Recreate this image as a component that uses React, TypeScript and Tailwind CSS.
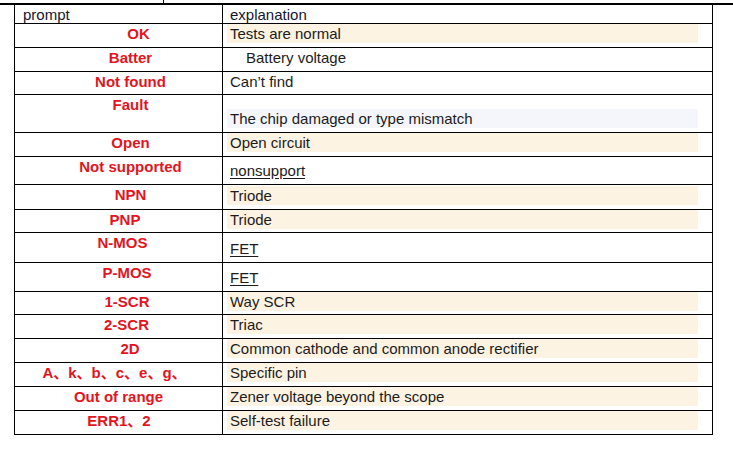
type Row = {
  prompt: string;
  text: string;
  h: string;
  shift: string;
  bg: string;
  extra?: string;
};

const rows: Row[] = [
  { prompt: "OK", text: "Tests are normal", h: "h-[24px]", shift: "pl-[40px]", bg: "bg-[#fdf3e3]" },
  { prompt: "Batter", text: "Battery voltage", h: "h-[24px]", shift: "pl-[24px]", bg: "", extra: "pl-[16px]" },
  { prompt: "Not found", text: "Can\u2019t find", h: "h-[23px]", shift: "pl-[24px]", bg: "" },
  { prompt: "Fault", text: "The chip damaged or type mismatch", h: "h-[38px]", shift: "pl-[24px]", bg: "bg-[#f4f6fb]" },
  { prompt: "Open", text: "Open circuit", h: "h-[24px]", shift: "pl-[24px]", bg: "bg-[#fdf3e3]" },
  { prompt: "Not supported", text: "nonsupport", h: "h-[28px]", shift: "pl-[24px]", bg: "", extra: "underline underline-offset-2" },
  { prompt: "NPN", text: "Triode", h: "h-[25px]", shift: "pl-[24px]", bg: "bg-[#fdf3e3]" },
  { prompt: "PNP", text: "Triode", h: "h-[23px]", shift: "pl-[13px]", bg: "bg-[#fdf3e3]" },
  { prompt: "N-MOS", text: "FET", h: "h-[30px]", shift: "pl-[8px]", bg: "", extra: "underline underline-offset-2" },
  { prompt: "P-MOS", text: "FET", h: "h-[29px]", shift: "pl-[17px]", bg: "", extra: "underline underline-offset-2" },
  { prompt: "1-SCR", text: "Way SCR", h: "h-[23px]", shift: "pl-[17px]", bg: "bg-[#fdf3e3]" },
  { prompt: "2-SCR", text: "Triac", h: "h-[24px]", shift: "pl-[16px]", bg: "bg-[#fdf3e3]" },
  { prompt: "2D", text: "Common cathode and common anode rectifier", h: "h-[24px]", shift: "pl-[23px]", bg: "bg-[#fdf3e3]" },
  { prompt: "A\u3001k\u3001b\u3001c\u3001e\u3001g\u3001", text: "Specific pin", h: "h-[24px]", shift: "pr-[8px]", bg: "bg-[#fdf3e3]" },
  { prompt: "Out of range", text: "Zener voltage beyond the scope", h: "h-[24px]", shift: "", bg: "bg-[#fdf3e3]" },
  { prompt: "ERR1\u30012", text: "Self-test failure", h: "h-[24px]", shift: "pl-[1px]", bg: "bg-[#fdf3e3]" },
];

export default function App() {
  return (
    <div className="w-[733px] h-[449px] bg-white font-['Liberation_Sans','Noto_Sans_CJK_SC',sans-serif] text-[15px] text-[#1c1c1c]">
      <div className="h-[3px]">
        <div className="ml-[163px] h-full w-px bg-black" />
      </div>
      <div className="h-[2px] bg-black" />
      <div className="ml-[14px] w-[699px] border-x border-black">
        <div className="grid h-[19px] grid-cols-[208px_1fr] border-b border-black leading-[17px] text-[#16162e]">
          <div className="flex items-center border-r border-black pl-[8px]">prompt</div>
          <div className="flex items-center pl-[7px]">explanation</div>
        </div>
        {rows.map((r) => (
          <div key={r.prompt} className={`grid grid-cols-[208px_1fr] border-b border-black ${r.h}`}>
            <div className={`border-r border-black pt-[1px] text-center font-bold leading-[17px] text-[#e3141d] ${r.shift}`}>
              {r.prompt}
            </div>
            <div className="flex items-end pb-[4px]">
              <div className={`ml-[4px] mr-[14px] h-[19px] flex-1 pl-[3px] leading-[19px] ${r.bg}`}>
                <span className={r.extra}>{r.text}</span>
              </div>
            </div>
          </div>
        ))}
      </div>
    </div>
  );
}
